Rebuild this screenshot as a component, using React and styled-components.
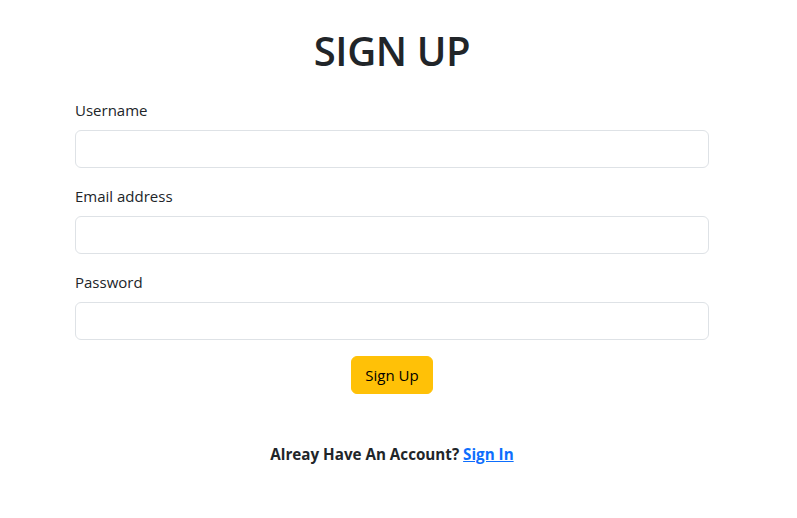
import React from "react";
import styled, { createGlobalStyle } from "styled-components";

const Global = createGlobalStyle`
  *, *::before, *::after { box-sizing: border-box; }
  body {
    margin: 0;
    background: #fff;
    color: #212529;
    font-family: "Open Sans", "Noto Sans", "Liberation Sans", sans-serif;
    font-size: 16px;
    line-height: 1.5;
  }
`;

const Page = styled.main`
  padding: 27px 88px 0 75px;
`;

const Title = styled.h1`
  margin: 0 0 23px;
  text-align: center;
  font-size: 40px;
  font-weight: 600;
  line-height: 48px;
  color: #212529;
  letter-spacing: -0.4px;
`;

const Form = styled.form`
  display: flex;
  flex-direction: column;
`;

const Field = styled.div`
  display: flex;
  flex-direction: column;
  margin-bottom: 16px;
`;

const Label = styled.label`
  margin-bottom: 8px;
  font-size: 15px;
  line-height: 24px;
  color: #212529;
`;

const Input = styled.input`
  height: 38px;
  width: 100%;
  padding: 6px 12px;
  border: 1px solid #dee2e6;
  border-radius: 6px;
  font: inherit;
  background: #fff;
  outline: none;
`;

const ButtonRow = styled.div`
  display: flex;
  justify-content: center;
`;

const Button = styled.button`
  height: 38px;
  padding: 6px 13px;
  border: 1px solid #ffc107;
  border-radius: 6px;
  background: #ffc107;
  color: #000;
  font-family: inherit;
  font-size: 15px;
  line-height: 24px;
  cursor: pointer;
`;

const Footer = styled.p`
  margin: 48px 0 0;
  text-align: center;
  font-weight: 700;
  font-size: 15.2px;
  line-height: 24px;
`;

const Link = styled.a`
  color: #0d6efd;
  text-decoration: underline;
`;

export default function App() {
  return (
    <>
      <Global />
      <Page>
        <Title>SIGN UP</Title>
        <Form onSubmit={(e) => e.preventDefault()}>
          <Field>
            <Label htmlFor="username">Username</Label>
            <Input id="username" type="text" />
          </Field>
          <Field>
            <Label htmlFor="email">Email address</Label>
            <Input id="email" type="email" />
          </Field>
          <Field>
            <Label htmlFor="password">Password</Label>
            <Input id="password" type="password" />
          </Field>
          <ButtonRow>
            <Button type="submit">Sign Up</Button>
          </ButtonRow>
        </Form>
        <Footer>
          Alreay Have An Account? <Link href="#">Sign In</Link>
        </Footer>
      </Page>
    </>
  );
}
